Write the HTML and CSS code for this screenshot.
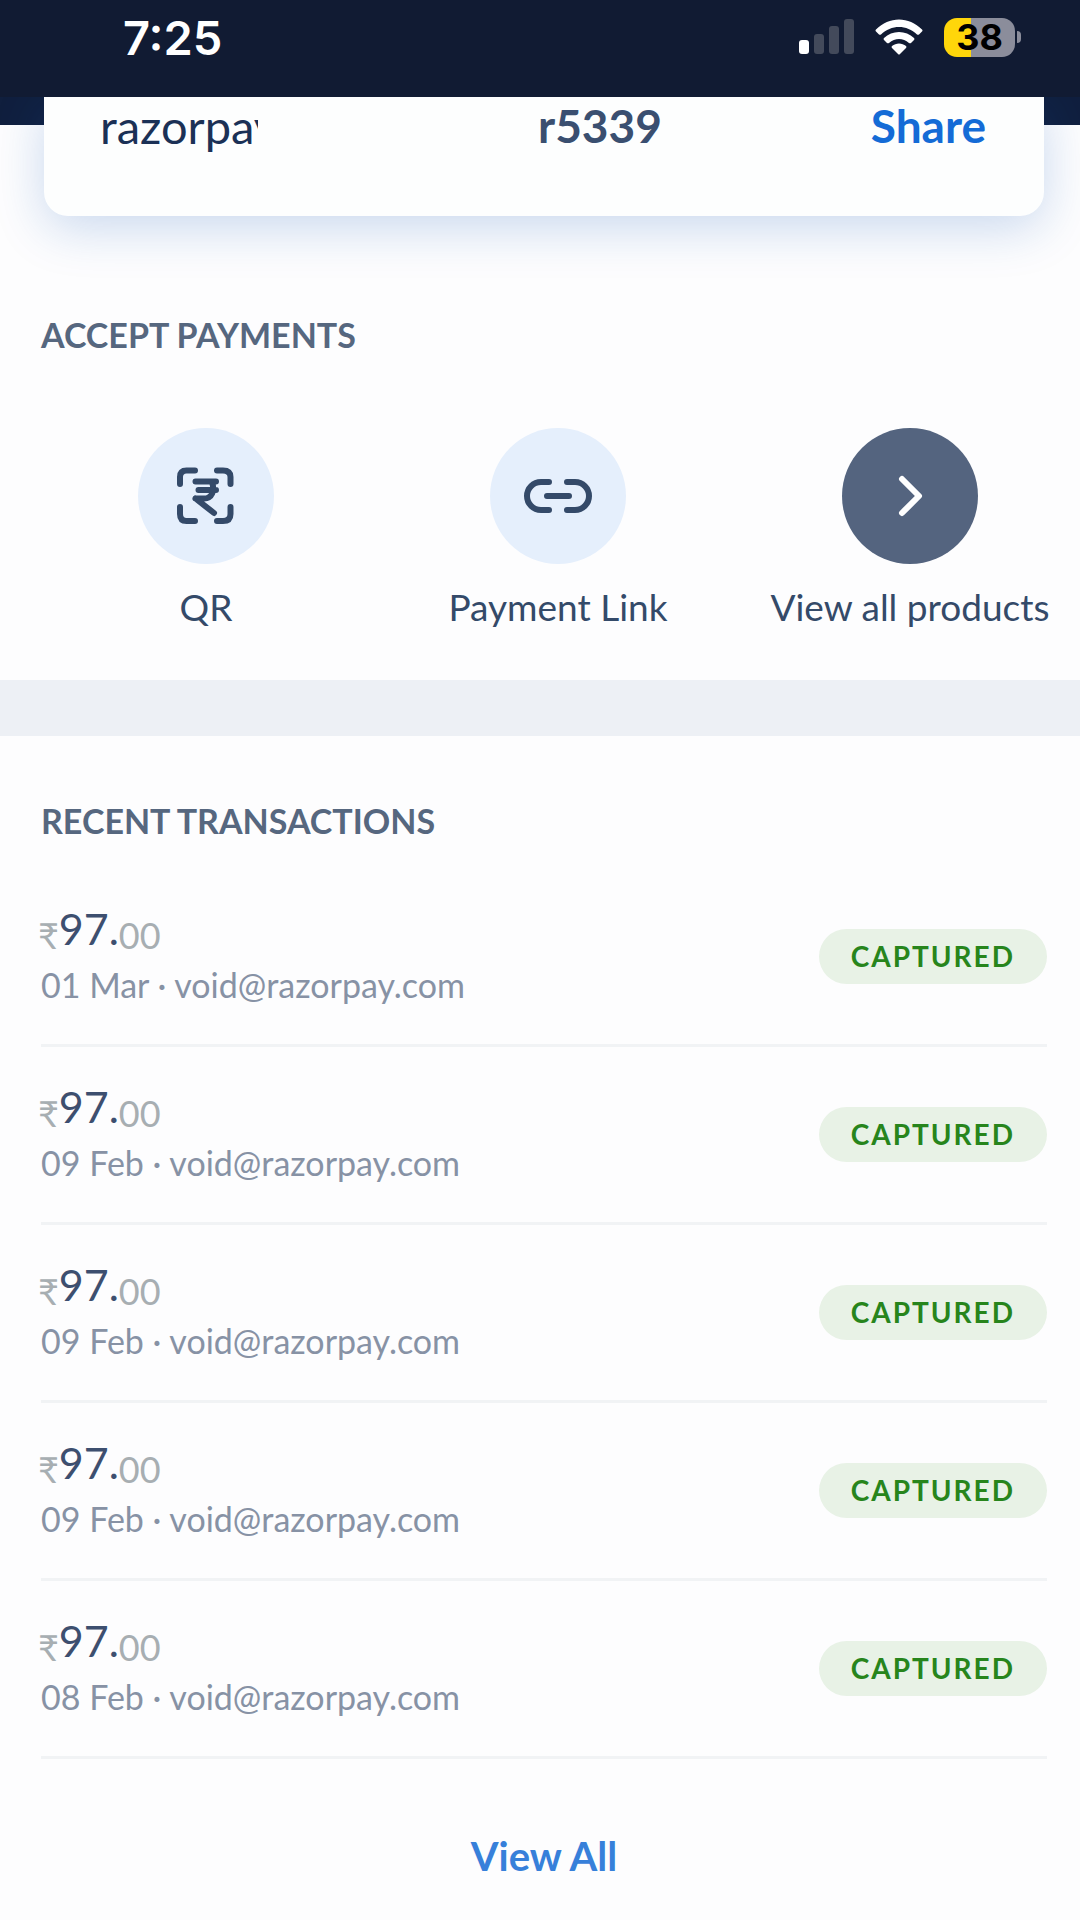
FILE: index.html
```html
<!DOCTYPE html>
<html lang="en">
<head>
<meta charset="utf-8">
<meta name="viewport" content="width=device-width, initial-scale=1">
<title>Payments</title>
<link rel="stylesheet" href="styles.css">
</head>
<body>
<header class="status">
  <time class="clock">7:25</time>
  <div class="indicators">
    <svg class="signal" width="56" height="36" viewBox="0 0 56 36" aria-hidden="true">
      <rect x="1" y="21" width="10" height="14" rx="3" fill="#fff"/>
      <g fill="#434a5b"><rect x="16" y="15" width="10" height="20" rx="3"/><rect x="31" y="7" width="10" height="28" rx="3"/><rect x="46" y="0" width="10" height="35" rx="3"/></g>
    </svg>
    <svg class="wifi" width="48" height="36" viewBox="0 0 48 36" aria-hidden="true" fill="#fff">
      <path d="M1 10.500C14-3 34-3 47 10.500Q48 11.500 47 12.500L44 15.500Q43 16 42 15.500C32 5.500 16 5.500 6 15.500Q5 16 4 15.500L1 12.500Q0 11.500 1 10.500Z"/>
      <path d="M9 19C17 11 31 11 39 19Q40 20 39 21L36 24Q35 24.500 34 24C28 18.500 20 18.500 14 24Q13 24.500 12 24L9 21Q8 20 9 19Z"/>
      <path d="M17 27C21 23.500 27 23.500 31 27Q32 28 31 29L25 35Q24 36 23 35L17 29Q16 28 17 27Z"/>
    </svg>
    <div class="battery"><span class="level">38</span><span class="nub"></span></div>
  </div>
</header>
<main>
  <section class="hero">
    <div class="card">
      <span class="account">razorpay</span>
      <span class="handle">r5339</span>
      <button class="share" type="button">Share</button>
    </div>
  </section>
  <section class="accept">
    <h2 class="heading">ACCEPT PAYMENTS</h2>
    <nav class="products">
      <a class="product" href="#qr">
        <span class="disc">
          <svg width="60" height="60" viewBox="0 0 60 60" aria-hidden="true" fill="none" stroke="#344a69" stroke-width="6" stroke-linecap="round" stroke-linejoin="round">
            <path d="M4 18V11Q4 4.500 10.500 4.500H19M41 4.500H47Q54.500 4.500 54.500 11V18M54.500 41V48Q54.500 55 47 55H41M19 55H10.500Q4 55 4 48V41"/>
            <path d="M19.500 15.500H40M22.500 24H40M19.500 32.500H28C36 32.500 39 25 36 16M19.500 32.500L38 47"/>
          </svg>
        </span>
        QR
      </a>
      <a class="product" href="#link">
        <span class="disc">
          <svg width="70" height="40" viewBox="0 0 70 40" aria-hidden="true" fill="none" stroke="#344a69" stroke-width="6" stroke-linecap="round">
            <path d="M26 6H18A14 14 0 0 0 18 34H26M44 6H52A14 14 0 0 1 52 34H44M24 20H46"/>
          </svg>
        </span>
        Payment Link
      </a>
      <a class="product" href="#products">
        <span class="disc dark">
          <svg width="30" height="44" viewBox="0 0 30 44" aria-hidden="true" fill="none" stroke="#fff" stroke-width="6" stroke-linecap="round" stroke-linejoin="round">
            <path d="M7 5L24 22L7 39"/>
          </svg>
        </span>
        View all products
      </a>
    </nav>
  </section>
  <section class="recent">
    <h2 class="heading">RECENT TRANSACTIONS</h2>
    <ul class="list">
      <li class="txn"><div class="detail"><p class="amount"><span class="minor">₹</span>97.<span class="minor">00</span></p><p class="meta">01 Mar · void@razorpay.com</p></div><span class="pill">CAPTURED</span></li>
      <li class="txn"><div class="detail"><p class="amount"><span class="minor">₹</span>97.<span class="minor">00</span></p><p class="meta">09 Feb · void@razorpay.com</p></div><span class="pill">CAPTURED</span></li>
      <li class="txn"><div class="detail"><p class="amount"><span class="minor">₹</span>97.<span class="minor">00</span></p><p class="meta">09 Feb · void@razorpay.com</p></div><span class="pill">CAPTURED</span></li>
      <li class="txn"><div class="detail"><p class="amount"><span class="minor">₹</span>97.<span class="minor">00</span></p><p class="meta">09 Feb · void@razorpay.com</p></div><span class="pill">CAPTURED</span></li>
      <li class="txn"><div class="detail"><p class="amount"><span class="minor">₹</span>97.<span class="minor">00</span></p><p class="meta">08 Feb · void@razorpay.com</p></div><span class="pill">CAPTURED</span></li>
    </ul>
    <a class="view-all" href="#all">View All</a>
  </section>
</main>
</body>
</html>
```
FILE: styles.css
```css
* { box-sizing: border-box; }
body {
  margin: 0;
  background: #fdfdfe;
  color: #344a69;
  font-family: Lato, "Noto Sans", sans-serif;
  overflow-x: hidden;
}
h2, p, ul { margin: 0; padding: 0; }
ul { list-style: none; }
a { color: inherit; text-decoration: none; }
button { border: 0; padding: 0; background: none; font: inherit; }

.status {
  display: flex;
  justify-content: space-between;
  align-items: flex-start;
  position: relative;
  z-index: 1;
  height: 97px;
  padding: 17px 59px 0 123px;
  background: #111b33;
  color: #fff;
  font-family: Inter, sans-serif;
}
.clock { font-size: 47px; line-height: 42px; font-weight: 600; }
.indicators { display: flex; align-items: center; gap: 21px; height: 40px; }
.battery { display: flex; align-items: center; gap: 2px; }
.level {
  width: 71px;
  border-radius: 13px;
  background: linear-gradient(90deg, #ffd60a 27px, #8b8d9b 27px);
  color: #000;
  font-size: 36px;
  line-height: 39px;
  font-weight: 700;
  text-align: center;
}
.nub { width: 4px; height: 12px; border-radius: 0 4px 4px 0; background: #8b8d9b; }

.hero {
  padding: 0 36px 0 44px;
  background: linear-gradient(#101f3e 28px, transparent 28px);
}
.card {
  display: flex;
  align-items: flex-start;
  height: 119px;
  padding: 2px 58px 0 56px;
  border-radius: 0 0 24px 24px;
  background: #fdfefe;
  box-shadow: 0 12px 50px rgba(20, 86, 180, 0.22);
  font-size: 46px;
  line-height: 54px;
}
.account { width: 158px; overflow: hidden; color: #1b3156; font-size: 47px; }
.handle { margin-left: 280px; color: #3a4f70; font-weight: 700; }
.share { margin-left: auto; color: #146bd6; font-weight: 700; }

.heading {
  color: #56677f;
  font-size: 34px;
  line-height: 40px;
  font-weight: 700;
}
.accept { padding: 99px 0 51px; overflow: hidden; }
.accept .heading { padding-left: 41px; }
.products {
  display: grid;
  grid-template-columns: repeat(3, 1fr);
  margin: 73px -6px 0 30px;
}
.product {
  display: flex;
  flex-direction: column;
  align-items: center;
  gap: 21px;
  font-size: 37px;
  line-height: 44px;
}
.disc {
  display: flex;
  align-items: center;
  justify-content: center;
  width: 136px;
  height: 136px;
  border-radius: 50%;
  background: #e5effc;
}
.dark { background: #54647f; }

.recent { padding: 65px 33px 24px 41px; border-top: 56px solid #edf0f5; }
.list { margin-top: 28px; }
.txn {
  display: flex;
  justify-content: space-between;
  align-items: center;
  height: 178px;
  border-bottom: 3px solid #f1f3f5;
}
.detail { padding-top: 4px; }
.amount {
  display: flex;
  align-items: flex-end;
  margin-left: -3px;
  color: #3d4f6f;
  font-size: 43px;
  line-height: 52px;
}
.minor { color: #a7aeb2; font-size: 36px; line-height: 40px; }
.meta { color: #8792a5; font-size: 34px; line-height: 60px; }
.pill {
  padding: 0 32px;
  border-radius: 28px;
  background: #e8f2e6;
  color: #27851c;
  font-size: 28px;
  line-height: 55px;
  font-weight: 700;
  letter-spacing: 2px;
}
.view-all {
  display: block;
  margin-top: 73px;
  color: #3780da;
  font-size: 40px;
  line-height: 48px;
  font-weight: 700;
  text-align: center;
}
```
